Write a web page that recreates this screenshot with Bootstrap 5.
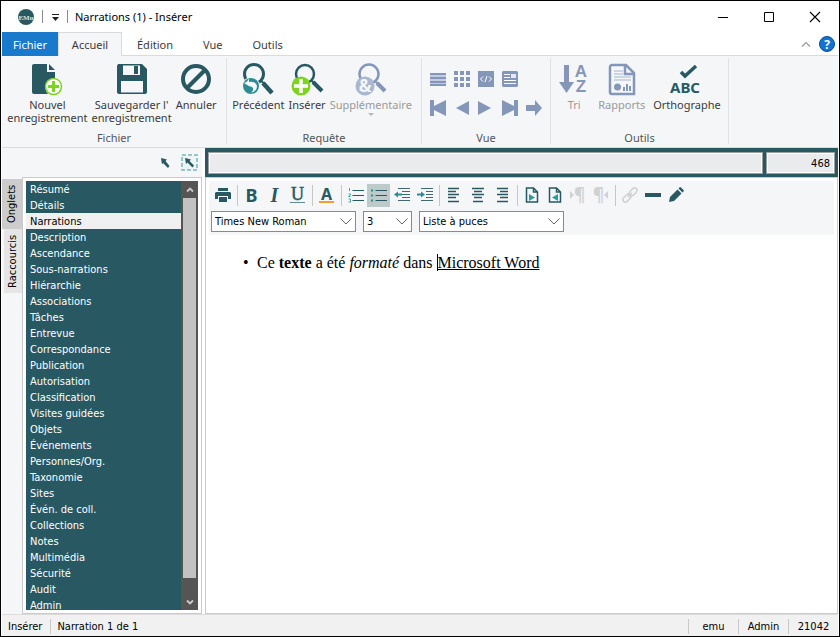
<!DOCTYPE html>
<html lang="fr">
<head>
<meta charset="utf-8">
<meta name="viewport" content="width=device-width, initial-scale=1">
<title>Narrations (1) - Insérer</title>
<link href="https://cdn.jsdelivr.net/npm/bootstrap@5.3.0/dist/css/bootstrap.min.css" rel="stylesheet">
<style>
:root{--teal:#285861;--slate:#8597b9;--pane:#f4f6f8;--line:#c8cacc}
body{font-family:"Noto Sans","Open Sans",sans-serif;font-size:11px;line-height:13px;color:#3b3b3b;background:#fff}
button{font:inherit;color:inherit;background:none;border:0;padding:0}
svg{display:block;flex:none;overflow:visible}
.win{height:100vh;border:1px solid #000;padding:0 1px}
.titlebar{height:31px;padding:0 17px 0 16px;color:#000}
.vsep{width:1px;height:13px;background:#8a8a8a}
.title{font-size:11px;margin-left:7px}
.winbtns{gap:34px}
.tabs{height:24px;border-bottom:1px solid #dadbdc;padding-right:3px}
.tabs .rtab{height:24px;padding:0 14px;margin-bottom:-1px;border:1px solid transparent;border-bottom:0}
.tabs .rtab.file{background:#1979ca;color:#fff;width:56px;padding:0}
.tabs .rtab.on{background:var(--pane);border-color:#dadbdc;width:64px;padding:0}
.ribbon{height:92px;background:var(--pane);border-bottom:1px solid #dadbdc}
.grp{border-right:1px solid #dfe1e4;margin:2px 0 3px;padding-top:6px}
.grp .glabel{height:12px;line-height:12px;color:#555}
.g1{width:225px}.g2{width:195px}.g3{width:129px}.g4{width:178px}
.rbtn{display:flex;flex-direction:column;align-items:center;gap:2px;line-height:13px;white-space:nowrap;text-align:center}
.rbtn:disabled{color:#9a9a9a}
.iconrow{display:grid;grid-template-columns:repeat(5,24px);padding-left:8px;height:29px;align-content:center}
.left{width:200px;background:var(--pane)}
.ptools{height:29px;padding:0 4px 0 0;gap:11px}
.vt{writing-mode:vertical-rl;transform:rotate(180deg);font-family:"DejaVu Sans Condensed","DejaVu Sans",sans-serif;font-size:11px;color:#000;background:#e5e5e5;width:18px;height:64px;line-height:12px;padding-right:0;padding-left:1px}
.vt.on{background:#ccc;width:20px;height:50px}
.vtabs{width:20px;padding-top:2px}
.box{border:1px solid var(--line);background:#fff;padding:3px}
.tree{background:var(--teal);overflow:hidden}
.tree button{display:block;height:16px;width:100%;padding:1px 0 0 4px;text-align:left;line-height:16px;color:#fff;white-space:nowrap;flex:none}
.tree button.on{background:#f0f0f0;color:#000}
.ui{font-family:"DejaVu Sans Condensed","DejaVu Sans",sans-serif;font-size:11px}
.sb{width:17px;background:#555;padding:0 2px}
.sb button{height:17px;width:13px;display:flex;align-items:center;justify-content:center}
.sb .thumb{background:#c2c2c2;margin-bottom:15px}
.right{margin-left:3px}
.sumbar{background:var(--teal);height:29px;padding:4px 3px 3px;gap:3px}
.sumbar input{border:1px solid #9aa0a2;outline:1px solid #fff;outline-offset:-2px;background:#eaebec;height:22px;padding:0 4px;min-width:0;color:#000}
.sumbar .num{width:69px;text-align:right}
.tb{background:var(--pane);min-height:54px;padding:2px 2px 0}
.tbrow{height:24px}
.tbrow button{width:23px;height:23px;display:flex;align-items:center;justify-content:center;flex:none}
.tbrow .al{width:24px}
.tbrow button.on{background:#bccbc9}
.tbrow .sep{width:1px;height:21px;background:#c4c8ca;margin:0 2px 0 3px;flex:none}
.glyph{color:var(--teal);font-size:18px;font-weight:700;line-height:18px}
.glyph.serif{font-family:"Liberation Serif",serif;font-size:20px}
.glyph.rule{font-size:16px;line-height:15px;border-bottom:1px solid #5d8b91;padding:0 1px}
.glyph.rule.serif{font-size:18px;font-weight:400;-webkit-text-stroke:.5px var(--teal)}
.glyph.ink{border-color:#f0a030;border-bottom-width:2px;line-height:14px;padding:0 2px}
.para{color:#cfd2d4;font-size:17px;font-weight:700;line-height:18px}
.tbsel{gap:7px;padding-top:4px}
.tb .s1{width:145px}.tb .s2{width:49px}
.tb select{appearance:none;border:1px solid #8a8a8a;border-radius:0;height:21px;padding:0 20px 0 3px;color:#000;background:#fff url("data:image/svg+xml,%3Csvg xmlns='http://www.w3.org/2000/svg' width='12' height='7'%3E%3Cpath d='M.5.5 6 6 11.5.5' fill='none' stroke='%23666'/%3E%3C/svg%3E") no-repeat right 3px center}
.doc{font-family:"Liberation Serif",serif;font-size:16px;line-height:20px;color:#000;outline:0;padding:18px 4px 0 48px}
.doc ul{padding:0;margin:0;list-style:none}
.doc li{display:flex}
.doc li::before{content:"•";width:14px;margin-left:-14px}
.caret{border-left:1px solid #000}
.status{height:22px;background:#f1f1f1;border-top:1px solid #dcdcdc;color:#000;padding-top:2px}
.status span{border-left:1px solid #c8c8c8;height:15px;line-height:15px;padding:0 6px}
.status .first{border-left:0;padding-right:8px}
.status .cell{width:50px;text-align:center;padding:0}
</style>
<script src="https://cdn.jsdelivr.net/npm/bootstrap@5.3.0/dist/js/bootstrap.bundle.min.js"></script>
</head>
<body>
<div class="win d-flex flex-column overflow-hidden">
<header class="titlebar d-flex align-items-center flex-shrink-0">
  <svg width="16" height="16" viewBox="0 0 16 16"><circle cx="8" cy="8" r="8" fill="#285861"/><text x="8" y="10.500" font-family="Liberation Serif" font-weight="bold" font-size="7" text-anchor="middle" fill="#d5e5e7">EMu</text></svg>
  <i class="vsep ms-2"></i>
  <button class="mx-2" aria-label="Personnaliser"><svg width="8" height="8" viewBox="0 0 8 8"><path d="M1 1.500h7" stroke="#222"/><path d="M1 4h7L4.500 8z" fill="#222"/></svg></button>
  <i class="vsep"></i>
  <span class="title">Narrations (1) - Insérer</span>
  <div class="winbtns d-flex ms-auto">
    <button aria-label="Réduire"><svg width="12" height="12"><path d="M1 6.500h10" stroke="#000"/></svg></button>
    <button aria-label="Agrandir"><svg width="12" height="12"><path d="M1.500 1.500h9v9h-9z" stroke="#000" fill="none"/></svg></button>
    <button aria-label="Fermer"><svg width="12" height="12"><path d="M1 1l10 10M11 1L1 11" stroke="#000" stroke-width="1.100"/></svg></button>
  </div>
</header>
<nav class="tabs d-flex flex-shrink-0">
  <button class="rtab file">Fichier</button><button class="rtab on">Accueil</button><button class="rtab">Édition</button><button class="rtab">Vue</button><button class="rtab">Outils</button>
  <div class="ms-auto d-flex align-items-center gap-2">
    <button aria-label="Replier le ruban"><svg width="10" height="6"><path d="M1 5.500L5 1.500 9 5.500" stroke="#999" fill="none" stroke-width="1.200"/></svg></button>
    <button aria-label="Aide"><svg width="16" height="16" viewBox="0 0 16 16"><circle cx="8" cy="8" r="7.500" fill="#1373d5" stroke="#0c4c96"/><text x="8" y="12.500" font-size="12" font-weight="bold" text-anchor="middle" fill="#fff" font-family="Noto Sans">?</text></svg></button>
  </div>
</nav>
<section class="ribbon d-flex flex-shrink-0">
  <div class="grp g1 d-flex flex-column justify-content-between">
    <div class="d-flex justify-content-center gap-1 pe-1">
      <button class="rbtn"><svg width="32" height="32" viewBox="0 0 32 32"><path fill="#285861" d="M3 0h13v8h8v7a9 9 0 0 0-7 15H3a2 2 0 0 1-2-2V2a2 2 0 0 1 2-2zM18 0l6 6h-6z"/><circle cx="22.500" cy="22.500" r="8" fill="#fff" stroke="#7ed321" stroke-width="1.500"/><path d="M22.500 17v11M17 22.500h11" stroke="#7ed321" stroke-width="3"/></svg><span>Nouvel<br>enregistrement</span></button>
      <button class="rbtn"><svg width="32" height="32" viewBox="0 0 32 32"><path fill="#285861" d="M2 0h24l5 5v23a2 2 0 0 1-2 2H3a2 2 0 0 1-2-2V2z"/><path fill="#f4f6f8" d="M7 1.500h17v9.500H7zM5 17h22v11.500H5z"/><path fill="#285861" d="M18 2h4v8h-4z"/></svg><span>Sauvegarder l'<br>enregistrement</span></button>
      <button class="rbtn"><svg width="32" height="32" viewBox="0 0 32 32"><g fill="none" stroke="#285861" stroke-width="4"><circle cx="16" cy="15" r="13"/><path d="M25 6L7 24"/></g></svg><span>Annuler</span></button>
    </div><div class="glabel text-center">Fichier</div>
  </div>
  <div class="grp g2 d-flex flex-column justify-content-between">
    <div class="d-flex justify-content-center gap-1 pe-1">
      <button class="rbtn"><svg width="32" height="32" viewBox="0 0 32 32"><circle cx="12" cy="10" r="9.500" fill="none" stroke="#285861" stroke-width="3"/><path d="M19 17l4 3" stroke="#285861" stroke-width="2"/><path d="M21 19l9 10" stroke="#285861" stroke-width="4.500"/><circle cx="9" cy="22" r="9" fill="#f4f6f8"/><circle cx="9" cy="22" r="8" fill="#2b8d91"/><path d="M2 19q4-1 5-5v4q7-1 8 4q0 5-6 7q4-4 1-6-4-1-8-4z" fill="#f4f6f8"/></svg><span>Précédent</span></button>
      <button class="rbtn"><svg width="32" height="32" viewBox="0 0 32 32"><circle cx="14" cy="10" r="9" fill="none" stroke="#285861" stroke-width="2.500"/><path d="M20 16l4 4" stroke="#285861" stroke-width="2"/><path d="M22 18l9 9" stroke="#285861" stroke-width="4"/><circle cx="10" cy="22" r="9.500" fill="#7ed321"/><path d="M10 15v14M3 22h14" stroke="#fff" stroke-width="3.500"/></svg><span>Insérer</span></button>
      <button class="rbtn" disabled><svg width="32" height="32" viewBox="0 0 32 32"><circle cx="14" cy="10" r="9.500" fill="none" stroke="#8597b9" stroke-width="2.500"/><path d="M20 17l4 4" stroke="#8597b9" stroke-width="2"/><path d="M22 19l8 8" stroke="#8597b9" stroke-width="4"/><circle cx="10" cy="22" r="9.500" fill="#a9b7d0"/><text x="10" y="28" font-family="Noto Sans" font-weight="bold" font-size="17" text-anchor="middle" fill="#f4f6f8">&amp;</text></svg><span>Supplémentaire</span><svg width="6" height="3"><path d="M0 0h6L3 3z" fill="#b5b7ba"/></svg></button>
    </div><div class="glabel text-center">Requête</div>
  </div>
  <div class="grp g3 d-flex flex-column">
    <div class="iconrow">
      <button aria-label="Liste"><svg width="16" height="16"><path fill="#c3cde0" d="M0 2h16v13H0z"/><path fill="#8597b9" d="M0 2h16v2H0zm0 4h16v2H0zm0 4h16v2H0zm0 3h16v2H0z"/></svg></button>
      <button aria-label="Grille"><svg width="16" height="16" fill="#8597b9"><path d="M0 0h4v4H0zm6 0h4v4H6zm6 0h4v4h-4zM0 6h4v4H0zm6 0h4v4H6zm6 0h4v4h-4zM0 12h4v4H0zm6 0h4v4H6zm6 0h4v4h-4z"/></svg></button>
      <button aria-label="Code"><svg width="16" height="16"><path fill="#8597b9" d="M0 0h16v16H0z"/><path d="M5 5.500L2.500 8 5 10.500M11 5.500L13.500 8 11 10.500M9 5l-2 6" stroke="#fff" fill="none"/></svg></button>
      <button aria-label="Page"><svg width="16" height="16"><path fill="#8597b9" d="M1 0h14l1 1v14l-1 1H1l-1-1V1z"/><path d="M2 3.500h6M2 6.500h6M2 9.500h12M2 12.500h12" stroke="#fff" fill="none"/><path d="M9 3h5v4H9z" fill="#e4e9f2"/></svg></button>
    </div>
    <div class="iconrow">
      <button aria-label="Premier"><svg width="16" height="16" fill="#8597b9"><path d="M0 0h4v6l12-6v16L4 10v6H0z"/></svg></button>
      <button aria-label="Précédent"><svg width="16" height="16" fill="#8597b9"><path d="M2 8l13-7v14z"/></svg></button>
      <button aria-label="Suivant"><svg width="16" height="16" fill="#8597b9"><path d="M0 1l13 7-13 7z"/></svg></button>
      <button aria-label="Dernier"><svg width="16" height="16" fill="#8597b9"><path d="M16 0h-4v6L0 0v16l12-6v6h4z"/></svg></button>
      <button aria-label="Aller à"><svg width="16" height="16" fill="#8597b9"><path d="M0 5h9V0l7 8-7 8v-5H0z"/></svg></button>
    </div>
    <div class="glabel text-center mt-auto">Vue</div>
  </div>
  <div class="grp g4 d-flex flex-column justify-content-between">
    <div class="d-flex justify-content-center gap-2">
      <button class="rbtn" disabled><svg width="32" height="32" viewBox="0 0 32 32" fill="#8597b9"><path d="M6 1h5v17h5L8.500 29 1 18h5z"/><text x="23" y="13" font-family="Liberation Sans" font-weight="bold" font-size="17" text-anchor="middle">A</text><text x="23" y="28" font-family="Liberation Sans" font-weight="bold" font-size="17" text-anchor="middle">Z</text></svg><span>Tri</span></button>
      <button class="rbtn" disabled><svg width="28" height="32" viewBox="0 0 28 32"><path d="M4 1h14l8 8v21H4a2 2 0 0 1-2-2V3a2 2 0 0 1 2-2zM17 1v9h9" fill="none" stroke="#8597b9" stroke-width="2.500"/><path d="M6 7h9M6 10h9M6 13h17M6 16h17" stroke="#ccd5e4" stroke-width="2"/><circle cx="9.500" cy="23" r="3.500" fill="#8597b9"/><path d="M16 27v-4M19 27v-7M22 27v-5" stroke="#8597b9" stroke-width="2"/></svg><span>Rapports</span></button>
      <button class="rbtn"><svg width="34" height="32" viewBox="0 0 34 32"><path d="M11 8l4 4L26 2" fill="none" stroke="#285861" stroke-width="3.500"/><text x="15" y="29" font-family="Noto Sans" font-weight="bold" font-size="15" text-anchor="middle" fill="#285861">ABC</text></svg><span>Orthographe</span></button>
    </div><div class="glabel text-center">Outils</div>
  </div>
</section>
<main class="d-flex flex-fill overflow-hidden">
  <aside class="left d-flex flex-column flex-shrink-0">
    <div class="ptools d-flex justify-content-end align-items-center flex-shrink-0">
      <button aria-label="Sélection"><svg width="10" height="12"><path d="M1 1l6 1.500-1.500 1.500 4 5-1.500 2-5-5L2 7.500z" fill="#285861"/></svg></button>
      <button aria-label="Sélection de zone"><svg width="17" height="17"><path d="M1 1h15v15H1z" fill="#eef5f6" stroke="#74b6ba" stroke-width="1.500" stroke-dasharray="4 2"/><path d="M4 4l6 1.500-1.500 1.500 4.500 4.500-1.500 2-5-5L5 10z" fill="#285861"/></svg></button>
    </div>
    <div class="d-flex flex-fill overflow-hidden">
      <div class="vtabs d-flex flex-column align-items-end flex-shrink-0"><button class="vt on">Onglets</button><button class="vt">Raccourcis</button></div>
      <div class="box d-flex flex-fill">
        <div class="tree ui flex-fill d-flex flex-column">
<button>Résumé</button><button>Détails</button><button class="on">Narrations</button><button>Description</button><button>Ascendance</button><button>Sous-narrations</button><button>Hiérarchie</button><button>Associations</button><button>Tâches</button><button>Entrevue</button><button>Correspondance</button><button>Publication</button><button>Autorisation</button><button>Classification</button><button>Visites guidées</button><button>Objets</button><button>Événements</button><button>Personnes/Org.</button><button>Taxonomie</button><button>Sites</button><button>Évén. de coll.</button><button>Collections</button><button>Notes</button><button>Multimédia</button><button>Sécurité</button><button>Audit</button><button>Admin</button>
        </div>
        <div class="sb d-flex flex-column flex-shrink-0"><button aria-label="Haut"><svg width="8" height="6"><path d="M1 4.500L4 1.500 7 4.500" stroke="#ccc" stroke-width="1.800" fill="none"/></svg></button><div class="thumb flex-fill"></div><button aria-label="Bas"><svg width="8" height="6"><path d="M1 1.500L4 4.500 7 1.500" stroke="#ccc" stroke-width="1.800" fill="none"/></svg></button></div>
      </div>
    </div>
  </aside>
  <section class="right flex-fill d-flex flex-column">
    <div class="sumbar ui d-flex flex-shrink-0"><input class="flex-fill" readonly aria-label="Résumé"><input class="num" readonly value="468" aria-label="Numéro"></div>
    <div class="box flex-fill">
      <div class="tb">
        <div class="tbrow d-flex align-items-center">
          <button aria-label="Imprimer"><svg width="16" height="16" fill="#285861"><path d="M3 1h10v3H3zM1 5h14l1 1v6h-3V9H3v3H0V6zM4 10h8v5H4z"/></svg></button><i class="sep"></i>
          <button aria-label="Gras"><span class="glyph">B</span></button>
          <button aria-label="Italique"><i class="glyph serif">I</i></button>
          <button aria-label="Souligné"><span class="glyph serif rule">U</span></button><i class="sep"></i>
          <button aria-label="Couleur"><span class="glyph rule ink">A</span></button><i class="sep"></i>
          <button aria-label="Liste numérotée"><svg width="16" height="16"><path d="M4.500 3.500H16M4.500 8.500H16M4.500 13.500H16" stroke="#285861"/><path d="M1.500 1v3M.5 7h2v1l-2 1.500h2M.5 12h2v3h-2" fill="none" stroke="#2b8d91" stroke-width=".8"/></svg></button>
          <button class="on" aria-label="Liste à puces"><svg width="16" height="16"><path d="M4.500 3.500H16M4.500 8.500H16M4.500 13.500H16" stroke="#285861" stroke-width="1.200"/><path d="M0 2.500h2v2H0zM0 7.500h2v2H0zM0 12.500h2v2H0z" fill="#2b8d91"/></svg></button>
          <button aria-label="Diminuer le retrait"><svg width="16" height="16"><path d="M4 1.500h12M8 4.500h8M8 7.500h8M8 10.500h8M4 13.500h12" stroke="#3f6a71"/><path d="M0 7.500l4-3v2h4v2H4v2z" fill="#2b8d91"/></svg></button>
          <button aria-label="Augmenter le retrait"><svg width="16" height="16"><path d="M4 1.500h12M9 4.500h7M9 7.500h7M9 10.500h7M4 13.500h12" stroke="#3f6a71"/><path d="M8 7.500l-4-3v2H0v2h4v2z" fill="#2b8d91"/></svg></button><i class="sep"></i>
          <button class="al" aria-label="Aligner à gauche"><svg width="14" height="16"><path d="M1 1.500h11M1 4.500h8M1 7.500h11M1 10.500h8M1 14.500h11" stroke="#285861" stroke-width="1.300"/></svg></button>
          <button class="al" aria-label="Centrer"><svg width="14" height="16"><path d="M1 1.500h12M3 4.500h8M1 7.500h12M3 10.500h8M2 14.500h10" stroke="#285861" stroke-width="1.300"/></svg></button>
          <button class="al" aria-label="Aligner à droite"><svg width="14" height="16"><path d="M2 1.500h11M5 4.500h8M2 7.500h11M5 10.500h8M2 14.500h11" stroke="#285861" stroke-width="1.300"/></svg></button><i class="sep"></i>
          <button aria-label="Gauche à droite"><svg width="14" height="16"><path d="M1.500 1h7l4 4v10h-11zM8.500 1v4h4" fill="none" stroke="#285861" stroke-width="1.500"/><path d="M4 7l6 3.500L4 14z" fill="#2b9d94"/></svg></button>
          <button aria-label="Droite à gauche"><svg width="14" height="16"><path d="M1.500 1h7l4 4v10h-11zM8.500 1v4h4" fill="none" stroke="#285861" stroke-width="1.500"/><path d="M10 7l-6 3.500 6 3.500z" fill="#2b9d94"/></svg></button>
          <button disabled aria-label="Paragraphe gauche à droite"><svg width="4" height="8" fill="#cfd2d4"><path d="M0 0l4 4-4 4z"/></svg><span class="para">¶</span></button>
          <button disabled aria-label="Paragraphe droite à gauche"><span class="para">¶</span><svg width="4" height="8" fill="#cfd2d4"><path d="M4 0L0 4l4 4z"/></svg></button><i class="sep"></i>
          <button disabled aria-label="Lien"><svg width="16" height="16"><g fill="none" stroke="#cfd2d4" stroke-width="1.500" transform="rotate(-45 8 8)"><rect x="-1" y="5.500" width="9" height="5" rx="2.500"/><rect x="8" y="5.500" width="9" height="5" rx="2.500"/><path d="M5 8h6"/></g></svg></button>
          <button aria-label="Ligne horizontale"><svg width="16" height="16"><path fill="#285861" d="M0 6h16v4H0z"/></svg></button>
          <button aria-label="Modifier"><svg width="16" height="16" fill="#285861"><path d="M1 15l1-5 7.500-7.500 4 4L6 14zM10.500 1.500l1-1a1 1 0 0 1 1.500 0l2.500 2.500a1 1 0 0 1 0 1.500l-1 1z"/></svg></button>
        </div>
        <div class="d-flex ui tbsel">
          <select aria-label="Police" class="s1"><option>Times New Roman</option></select>
          <select aria-label="Taille" class="s2"><option>3</option></select>
          <select aria-label="Style" class="s1"><option>Liste à puces</option></select>
        </div>
      </div>
      <div class="doc" contenteditable="true" role="textbox" aria-label="Narration"><ul><li><span>Ce <b>texte</b> a été <i>formaté</i> dans <u class="caret">Microsoft Word</u></span></li></ul></div>
    </div>
  </section>
</main>
<footer class="status ui d-flex align-items-center flex-shrink-0"><span class="first">Insérer</span><span class="me-auto">Narration 1 de 1</span><span class="cell">emu</span><span class="cell">Admin</span><span class="cell">21042</span></footer>
</div>
</body>
</html>
